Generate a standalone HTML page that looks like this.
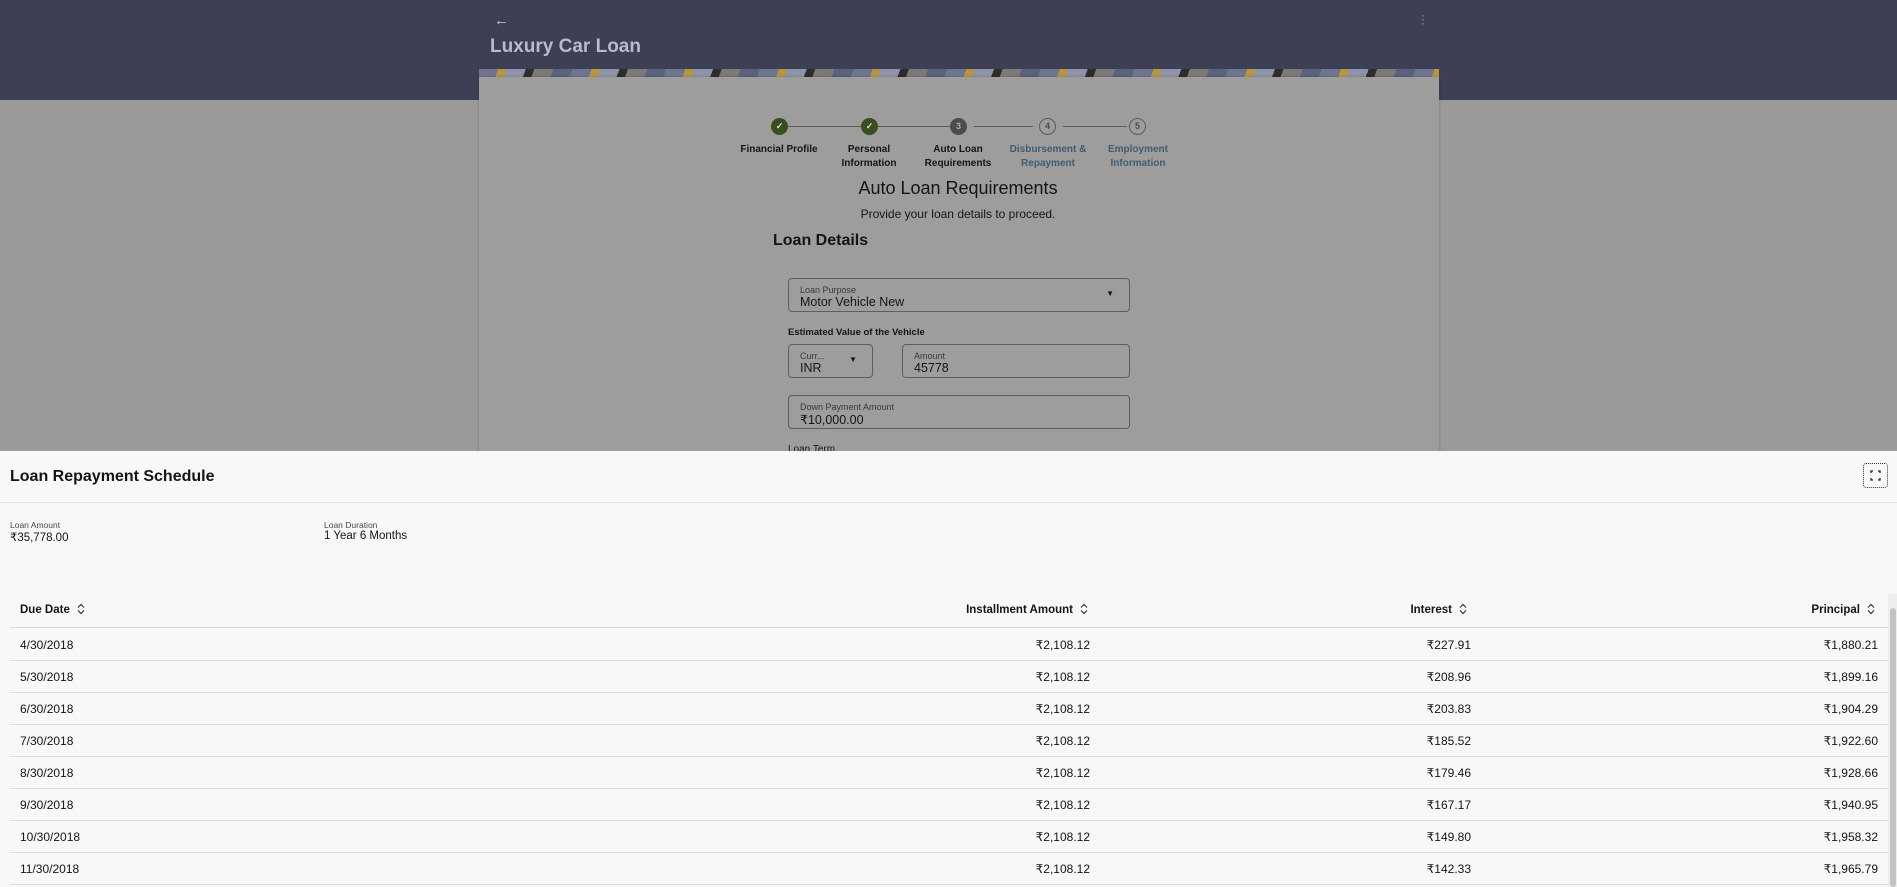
<!DOCTYPE html>
<html><head><meta charset="utf-8"><style>
*{box-sizing:border-box;margin:0;padding:0}
body{width:1897px;height:887px;overflow:hidden;background:#9b9a98;font-family:"Liberation Sans",sans-serif;position:relative;color:#161513}
.abs{position:absolute}
.hdr{left:0;top:0;width:1897px;height:100px;background:#3d3f55}
.banner{left:479px;top:69px;width:960px;height:8px;background:repeating-linear-gradient(110deg,#6f7590 0 18px,#b8953f 18px 26px,#8d93a8 26px 44px,#2e2d2b 44px 52px,#7b7a78 52px 70px,#5b6280 70px 88px)}
.card{left:479px;top:77px;width:960px;height:380px;background:#9e9d9b;box-shadow:0 0 3px rgba(0,0,0,.2)}
.c{width:17px;height:17px;border-radius:50%;font-size:9px;font-weight:bold;text-align:center;line-height:17px}
.ln{height:1px;background:#5d5c5a;top:126px}
.lbl{font-size:10px;font-weight:bold;text-align:center;width:90px;line-height:14px;top:143px}
.fld{border:1px solid #5f5e5c;border-radius:4px;height:34px}
.fl{font-size:9px;color:#3a3937;position:absolute;left:11px;top:6px}
.fv{font-size:12.5px;position:absolute;left:11px;top:16px}
.sheet{left:0;top:451px;width:1897px;height:436px;background:#f9f8f6}
.row{position:absolute;left:10px;width:1878px;height:32px;border-bottom:1px solid #dedcd9;font-size:12px}
.row span{position:absolute;top:9px}
.r1{right:798px}.r2{right:417px}.r3{right:10px}
.srt{display:inline-block;width:8px;height:12px;margin-left:7px;vertical-align:-2px}
</style></head><body>
<div class="abs hdr"></div>
<div class="abs" style="left:494px;top:12px;color:#c9c9d2;font-size:15px">←</div>
<div class="abs" style="left:1421px;top:13px;color:#9aa0b3;font-size:12px;line-height:4px">·<br>·<br>·</div>
<div class="abs" style="left:490px;top:36px;color:#b9bbc6;font-size:19px;font-weight:bold">Luxury Car Loan</div>
<div class="abs banner"></div>
<div class="abs card"></div>
<div class="abs ln" style="left:788px;width:82px"></div>
<div class="abs ln" style="left:878px;width:72px"></div>
<div class="abs ln" style="left:974px;width:59px"></div>
<div class="abs ln" style="left:1063px;width:64px"></div>
<div class="abs c" style="left:771px;top:118px;background:#365020;color:#ddd">✓</div>
<div class="abs c" style="left:861px;top:118px;background:#365020;color:#ddd">✓</div>
<div class="abs c" style="left:950px;top:118px;background:#4d4c4a;color:#aaa">3</div>
<div class="abs c" style="left:1039px;top:118px;border:1px solid #5d5c5a;color:#4d4c4a;line-height:15px">4</div>
<div class="abs c" style="left:1129px;top:118px;border:1px solid #5d5c5a;color:#4d4c4a;line-height:15px">5</div>
<div class="abs lbl" style="left:734px">Financial Profile</div>
<div class="abs lbl" style="left:824px">Personal<br>Information</div>
<div class="abs lbl" style="left:913px">Auto Loan<br>Requirements</div>
<div class="abs lbl" style="left:1003px;color:#3e5c74">Disbursement &amp;<br>Repayment</div>
<div class="abs lbl" style="left:1093px;color:#3e5c74">Employment<br>Information</div>
<div class="abs" style="left:758px;top:178px;width:400px;text-align:center;font-size:18px">Auto Loan Requirements</div>
<div class="abs" style="left:758px;top:207px;width:400px;text-align:center;font-size:12px">Provide your loan details to proceed.</div>
<div class="abs" style="left:773px;top:232px;font-size:16px;font-weight:bold">Loan Details</div>
<div class="abs fld" style="left:788px;top:278px;width:342px"><div class="fl">Loan Purpose</div><div class="fv">Motor Vehicle New</div><div class="abs" style="right:15px;top:10px;font-size:8px">▼</div></div>
<div class="abs" style="left:788px;top:327px;font-size:9.5px;font-weight:bold">Estimated Value of the Vehicle</div>
<div class="abs fld" style="left:788px;top:344px;width:85px"><div class="fl">Curr...</div><div class="fv">INR</div><div class="abs" style="right:15px;top:10px;font-size:8px">▼</div></div>
<div class="abs fld" style="left:902px;top:344px;width:228px"><div class="fl">Amount</div><div class="fv">45778</div></div>
<div class="abs fld" style="left:788px;top:395px;width:342px"><div class="fl">Down Payment Amount</div><div class="fv">₹10,000.00</div></div>
<div class="abs" style="left:788px;top:444px;font-size:10px">Loan Term</div>

<div class="abs sheet">
<div class="abs" style="left:10px;top:17px;font-size:16px;font-weight:bold">Loan Repayment Schedule</div>
<div class="abs" style="left:1863px;top:12px;width:25px;height:25px;border:1px dotted #333;border-radius:3px">
<svg width="23" height="23" viewBox="0 0 23 23" fill="none" stroke="#222" stroke-width="1.3"><path d="M7 9V7h2M14 7h2v2M16 14v2h-2M9 16H7v-2"/></svg></div>
<div class="abs" style="left:0;top:51px;width:1897px;height:1px;background:#e4e2df"></div>
<div class="abs" style="left:10px;top:69px;font-size:8.5px;color:#4a4744">Loan Amount</div>
<div class="abs" style="left:10px;top:79px;font-size:11.5px">₹35,778.00</div>
<div class="abs" style="left:324px;top:69px;font-size:8.5px;color:#4a4744">Loan Duration</div>
<div class="abs" style="left:324px;top:79px;font-size:11.5px">1 Year 6 Months</div>
<div class="row" style="top:145px;height:32px;font-weight:bold;font-size:11.5px;border-bottom:1px solid #d8d6d3"><span style="left:10px;top:7px">Due Date<svg class="srt" viewBox="0 0 8 12" fill="none" stroke="#333" stroke-width="1.2"><path d="M1 4.5L4 1.5L7 4.5M1 7.5L4 10.5L7 7.5"/></svg></span><span style="right:800px;top:7px">Installment Amount<svg class="srt" viewBox="0 0 8 12" fill="none" stroke="#333" stroke-width="1.2"><path d="M1 4.5L4 1.5L7 4.5M1 7.5L4 10.5L7 7.5"/></svg></span><span style="right:421px;top:7px">Interest<svg class="srt" viewBox="0 0 8 12" fill="none" stroke="#333" stroke-width="1.2"><path d="M1 4.5L4 1.5L7 4.5M1 7.5L4 10.5L7 7.5"/></svg></span><span style="right:13px;top:7px">Principal<svg class="srt" viewBox="0 0 8 12" fill="none" stroke="#333" stroke-width="1.2"><path d="M1 4.5L4 1.5L7 4.5M1 7.5L4 10.5L7 7.5"/></svg></span></div>
<div class="row" style="top:178px"><span style="left:10px">4/30/2018</span><span class="r1">₹2,108.12</span><span class="r2">₹227.91</span><span class="r3">₹1,880.21</span></div>
<div class="row" style="top:210px"><span style="left:10px">5/30/2018</span><span class="r1">₹2,108.12</span><span class="r2">₹208.96</span><span class="r3">₹1,899.16</span></div>
<div class="row" style="top:242px"><span style="left:10px">6/30/2018</span><span class="r1">₹2,108.12</span><span class="r2">₹203.83</span><span class="r3">₹1,904.29</span></div>
<div class="row" style="top:274px"><span style="left:10px">7/30/2018</span><span class="r1">₹2,108.12</span><span class="r2">₹185.52</span><span class="r3">₹1,922.60</span></div>
<div class="row" style="top:306px"><span style="left:10px">8/30/2018</span><span class="r1">₹2,108.12</span><span class="r2">₹179.46</span><span class="r3">₹1,928.66</span></div>
<div class="row" style="top:338px"><span style="left:10px">9/30/2018</span><span class="r1">₹2,108.12</span><span class="r2">₹167.17</span><span class="r3">₹1,940.95</span></div>
<div class="row" style="top:370px"><span style="left:10px">10/30/2018</span><span class="r1">₹2,108.12</span><span class="r2">₹149.80</span><span class="r3">₹1,958.32</span></div>
<div class="row" style="top:402px"><span style="left:10px">11/30/2018</span><span class="r1">₹2,108.12</span><span class="r2">₹142.33</span><span class="r3">₹1,965.79</span></div>
<div class="abs" style="left:1888px;top:143px;width:9px;height:293px;background:#efeeec"></div>
<div class="abs" style="left:1890px;top:157px;width:6px;height:279px;background:#c4c3c1;border-radius:3px"></div>
</div>
</body></html>
